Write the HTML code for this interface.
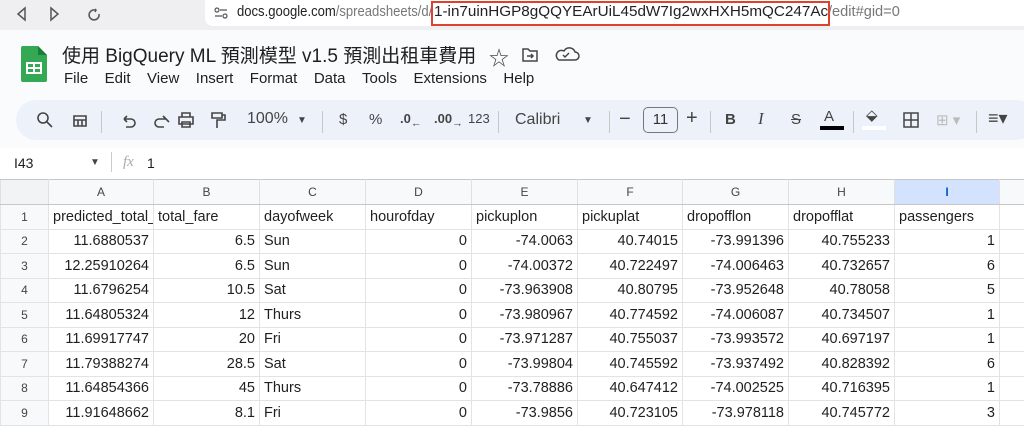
<!DOCTYPE html>
<html><head><meta charset="utf-8"><style>
*{box-sizing:border-box;margin:0;padding:0}
body{width:1024px;height:424px;overflow:hidden;background:#f9fbfd;font-family:"Liberation Sans","Noto Sans CJK TC",sans-serif;color:#1f1f1f;position:relative}
.abs{position:absolute}
.top{left:0;top:0;width:1024px;height:30px;background:#efeff1}
.addr{left:205px;top:0;width:819px;height:26px;background:#fff;border-radius:0 0 0 8px}
.url{top:4px;font-size:14.6px;color:#222;white-space:nowrap;transform-origin:0 0}
.g{color:#777}
.redbox{left:431px;top:1px;width:399px;height:25px;border:2px solid #e0412f}
.title{left:62px;top:41px;font-size:19px;color:#1f1f1f;white-space:nowrap}
.menu{left:64px;top:70px;font-size:15px;white-space:nowrap}
.menu span{margin-right:16.5px}
.tb{left:16px;top:100px;width:1020px;height:40px;background:#edf2fa;border-radius:20px}
.tbi{top:111px;font-size:15px;color:#444;white-space:nowrap}
.sep{top:111px;width:1px;height:22px;background:#c7c7c7}
.fb{left:0;top:148px;width:1024px;height:31px;background:#fff}
.grid{left:0;top:179px;background:#fff}
table{border-collapse:collapse;table-layout:fixed;font-size:14.5px;width:1024px}
td{border:1px solid #e2e3e3;height:24.5px;padding:0 4px;white-space:nowrap;overflow:hidden}
tr.h td{height:25px;background:#f8f9fa;color:#444;font-size:12px;text-align:center;border-color:#c7c7c7 #e0e0e0}
td.rh{background:#f8f9fa;color:#444;font-size:12px;text-align:center}
td.r{text-align:right}
</style></head><body>
<div class="abs top"></div>
<div class="abs addr"></div>
<svg class="abs" style="left:15px;top:6px" width="90" height="16" viewBox="0 0 90 16" fill="none" stroke="#555" stroke-width="1.5"><path d="M10 2 L3 8 L10 14Z"/><path d="M36 2 L43 8 L36 14Z"/><path d="M80 4 A5 5 0 1 0 84 8 M80 3 l1 1 -1 2"/></svg>
<svg class="abs" style="left:214px;top:6px" width="14" height="14" viewBox="0 0 14 14" fill="none" stroke="#555" stroke-width="1.2"><circle cx="3" cy="4" r="2"/><path d="M6 4h7M1 10h7"/><circle cx="11" cy="10" r="2"/></svg>
<div class="abs url" style="left:237px;transform:scaleX(0.895)">docs.google.com<span class="g">/spreadsheets/d/</span></div>
<div class="abs url" style="left:434px;transform:scaleX(1.045)">1-in7uinHGP8gQQYEArUiL45dW7Ig2wxHXH5mQC247Ac</div>
<div class="abs url g" style="left:828px">/edit#gid=0</div>
<div class="abs redbox"></div>
<svg class="abs" style="left:21px;top:46px" width="26" height="36" viewBox="0 0 26 36"><path d="M2 0h15l9 9v25a2 2 0 0 1-2 2H2a2 2 0 0 1-2-2V2a2 2 0 0 1 2-2z" fill="#34a853"/><path d="M17 0v9h9z" fill="#188038"/><rect x="5" y="16" width="16" height="12" fill="#fff"/><path d="M7 18h5v3H7zM14 18h5v3h-5zM7 23h5v3H7zM14 23h5v3h-5z" fill="#34a853"/></svg>
<div class="abs title">使用 BigQuery ML 預測模型 v1.5 預測出租車費用</div>
<div class="abs" style="left:489px;top:42px;font-size:20px;color:#444">☆</div>
<svg class="abs" style="left:522px;top:46px" width="60" height="18" viewBox="0 0 60 18" fill="none" stroke="#444" stroke-width="1.5"><path d="M1 3h5l2 2h7v10H1z"/><path d="M5 10h6M9 8l2 2-2 2"/><path d="M37 14h16a4 4 0 0 0 0-8 6 6 0 0 0-11-1 4 4 0 0 0-5 9z"/><path d="M41 9l2 2 4-4"/></svg>
<div class="abs menu"><span>File</span><span>Edit</span><span>View</span><span>Insert</span><span>Format</span><span>Data</span><span>Tools</span><span>Extensions</span><span>Help</span></div>
<div class="abs tb"></div>
<svg class="abs" style="left:36px;top:110px" width="200" height="20" viewBox="0 0 200 20" fill="none" stroke="#444" stroke-width="1.6"><circle cx="7" cy="8" r="5"/><path d="M11 12l5 5"/><path d="M38 6h12v10H38zM38 10h12M42 10v6M46 10v6"/><path d="M88 9h7a4 4 0 0 1 0 8h-5M88 9l3-3M88 9l3 3"/><path d="M130 9h-7a4 4 0 0 0 0 8h5M130 9l-3-3M130 9l3 3"/><path d="M143 7h14v7h-14zM146 7V3h8v4M146 12h8v5h-8z"/><path d="M176 3h10v5h-10zM186 5h3v5h-8v3M181 13v5"/></svg>
<div class="abs sep" style="left:101px"></div>
<div class="abs tbi" style="left:247px;top:110px;font-size:16px">100%</div>
<div class="abs tbi" style="left:297px;top:115px;font-size:10px">▼</div>
<div class="abs sep" style="left:322px"></div>
<div class="abs tbi" style="left:339px">$</div>
<div class="abs tbi" style="left:369px">%</div>
<div class="abs tbi" style="left:400px;font-size:13px;font-weight:bold">.0<sub>←</sub></div>
<div class="abs tbi" style="left:434px;font-size:13px;font-weight:bold">.00<sub>→</sub></div>
<div class="abs tbi" style="left:468px;font-size:13px">123</div>
<div class="abs sep" style="left:498px"></div>
<div class="abs tbi" style="left:515px;font-size:16px">Calibri</div>
<div class="abs tbi" style="left:583px;top:115px;font-size:10px">▼</div>
<div class="abs sep" style="left:609px"></div>
<div class="abs tbi" style="left:619px;top:108px;font-size:20px">−</div>
<div class="abs" style="left:643px;top:107px;width:35px;height:26px;border:1px solid #777;border-radius:5px;font-size:15px;text-align:center;line-height:24px;color:#333">11</div>
<div class="abs tbi" style="left:686px;top:107px;font-size:20px">+</div>
<div class="abs sep" style="left:710px"></div>
<div class="abs tbi" style="left:725px;font-weight:bold">B</div>
<div class="abs tbi" style="left:758px;font-style:italic;font-family:'Liberation Serif',serif;font-size:17px;top:109px">I</div>
<div class="abs tbi" style="left:791px;text-decoration:line-through">S</div>
<div class="abs tbi" style="left:824px;top:108px">A</div>
<div class="abs" style="left:820px;top:126px;width:24px;height:4px;background:#000"></div>
<div class="abs sep" style="left:853px"></div>
<div class="abs tbi" style="left:866px;top:106px">⬙</div>
<div class="abs" style="left:862px;top:126px;width:24px;height:4px;background:#fff"></div>
<svg class="abs" style="left:903px;top:112px" width="16" height="16" viewBox="0 0 16 16" fill="none" stroke="#444" stroke-width="1.5"><path d="M1 1h14v14H1zM8 1v14M1 8h14"/></svg>
<div class="abs tbi" style="left:936px;color:#bbb">⊞ ▾</div>
<div class="abs sep" style="left:976px"></div>
<div class="abs tbi" style="left:988px;top:108px;font-size:18px">≡▾</div>
<div class="abs fb"></div>
<div class="abs" style="left:14px;top:155px;font-size:14px">I43</div>
<div class="abs" style="left:90px;top:157px;font-size:10px;color:#444">▼</div>
<div class="abs" style="left:111px;top:152px;width:1px;height:20px;background:#ccc"></div>
<div class="abs" style="left:123px;top:154px;font-size:15px;color:#aaa;font-style:italic;font-family:'Liberation Serif',serif">fx</div>
<div class="abs" style="left:147px;top:155px;font-size:14px">1</div>
<div class="abs grid">
<table>
<colgroup><col style="width:48px"><col style="width:105px"><col style="width:106px"><col style="width:106px"><col style="width:106px"><col style="width:106px"><col style="width:105px"><col style="width:106px"><col style="width:106px"><col style="width:105px"><col style="width:25px"></colgroup>
<tr class="h"><td style="background:#f1f3f4"></td><td>A</td><td>B</td><td>C</td><td>D</td><td>E</td><td>F</td><td>G</td><td>H</td><td style="background:#d3e3fd;font-weight:bold;color:#0b57d0">I</td><td style="background:#f8f9fa"></td></tr>
<tr><td class="rh">1</td><td>predicted_total_</td><td>total_fare</td><td>dayofweek</td><td>hourofday</td><td>pickuplon</td><td>pickuplat</td><td>dropofflon</td><td>dropofflat</td><td>passengers</td><td></td></tr>
<tr><td class="rh">2</td><td class="r">11.6880537</td><td class="r">6.5</td><td>Sun</td><td class="r">0</td><td class="r">-74.0063</td><td class="r">40.74015</td><td class="r">-73.991396</td><td class="r">40.755233</td><td class="r">1</td><td></td></tr>
<tr><td class="rh">3</td><td class="r">12.25910264</td><td class="r">6.5</td><td>Sun</td><td class="r">0</td><td class="r">-74.00372</td><td class="r">40.722497</td><td class="r">-74.006463</td><td class="r">40.732657</td><td class="r">6</td><td></td></tr>
<tr><td class="rh">4</td><td class="r">11.6796254</td><td class="r">10.5</td><td>Sat</td><td class="r">0</td><td class="r">-73.963908</td><td class="r">40.80795</td><td class="r">-73.952648</td><td class="r">40.78058</td><td class="r">5</td><td></td></tr>
<tr><td class="rh">5</td><td class="r">11.64805324</td><td class="r">12</td><td>Thurs</td><td class="r">0</td><td class="r">-73.980967</td><td class="r">40.774592</td><td class="r">-74.006087</td><td class="r">40.734507</td><td class="r">1</td><td></td></tr>
<tr><td class="rh">6</td><td class="r">11.69917747</td><td class="r">20</td><td>Fri</td><td class="r">0</td><td class="r">-73.971287</td><td class="r">40.755037</td><td class="r">-73.993572</td><td class="r">40.697197</td><td class="r">1</td><td></td></tr>
<tr><td class="rh">7</td><td class="r">11.79388274</td><td class="r">28.5</td><td>Sat</td><td class="r">0</td><td class="r">-73.99804</td><td class="r">40.745592</td><td class="r">-73.937492</td><td class="r">40.828392</td><td class="r">6</td><td></td></tr>
<tr><td class="rh">8</td><td class="r">11.64854366</td><td class="r">45</td><td>Thurs</td><td class="r">0</td><td class="r">-73.78886</td><td class="r">40.647412</td><td class="r">-74.002525</td><td class="r">40.716395</td><td class="r">1</td><td></td></tr>
<tr><td class="rh">9</td><td class="r">11.91648662</td><td class="r">8.1</td><td>Fri</td><td class="r">0</td><td class="r">-73.9856</td><td class="r">40.723105</td><td class="r">-73.978118</td><td class="r">40.745772</td><td class="r">3</td><td></td></tr>
</table></div>
</body></html>
